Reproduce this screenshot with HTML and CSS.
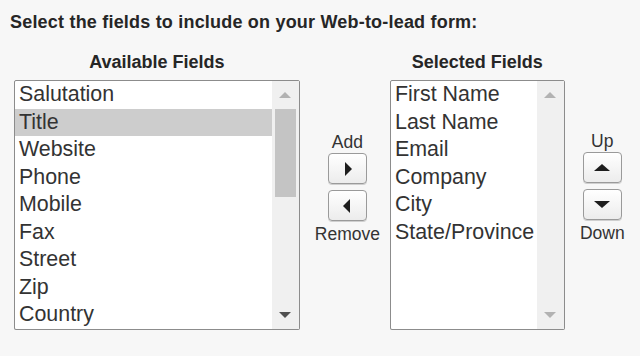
FILE: index.html
```html
<!DOCTYPE html>
<html lang="en">
<head>
    <meta charset="UTF-8">
    <title>Web-to-Lead Fields</title>
    <link rel="stylesheet" href="styles.css">
</head>
<body>
    <p class="intro">Select the fields to include on your Web-to-lead form:</p>

    <div class="picker">
        <!-- available -->
        <div class="field-col col-available">
            <div class="col-title">Available Fields</div>
            <div class="listbox">
                <ul class="options">
                    <li>Salutation</li>
                    <li class="selected">Title</li>
                    <li>Website</li>
                    <li>Phone</li>
                    <li>Mobile</li>
                    <li>Fax</li>
                    <li>Street</li>
                    <li>Zip</li>
                    <li>Country</li>
                </ul>
                <div class="scrollbar">
                    <span class="arrow arrow-up light"></span>
                    <div class="track"><div class="thumb"></div></div>
                    <span class="arrow arrow-down"></span>
                </div>
            </div>
        </div>

        <!-- add / remove -->
        <div class="mover">
            <span class="mover-label">Add</span>
            <button class="mv-btn" title="Add"><span class="tri tri-right"></span></button>
            <button class="mv-btn" title="Remove"><span class="tri tri-left"></span></button>
            <span class="mover-label">Remove</span>
        </div>

        <!-- selected -->
        <div class="field-col col-selected">
            <div class="col-title">Selected Fields</div>
            <div class="listbox">
                <ul class="options">
                    <li>First Name</li>
                    <li>Last Name</li>
                    <li>Email</li>
                    <li>Company</li>
                    <li>City</li>
                    <li>State/Province</li>
                </ul>
                <div class="scrollbar">
                    <span class="arrow arrow-up light"></span>
                    <div class="track"></div>
                    <span class="arrow arrow-down light"></span>
                </div>
            </div>
        </div>

        <!-- order -->
        <div class="mover order">
            <span class="mover-label">Up</span>
            <button class="mv-btn" title="Up"><span class="tri tri-up"></span></button>
            <button class="mv-btn" title="Down"><span class="tri tri-down"></span></button>
            <span class="mover-label">Down</span>
        </div>
    </div>
</body>
</html>
```

FILE: styles.css
```css
/* base */
body {
    margin: 0;
    padding: 12px 0 0 10px;
    background: #f7f7f7;
    font-family: 'Liberation Sans', Arial, sans-serif;
    color: #262626;
}

/* heading line */
.intro {
    margin: 0;
    font-size: 18px;
    font-weight: bold;
    letter-spacing: 0.2px;
    line-height: 20px;
}

.picker {
    display: flex;
    align-items: flex-start;
    margin-top: 20px;
}

.field-col {
    display: flex;
    flex-direction: column;
}

.col-available {
    width: 288px;
    margin-left: 4px;
}

.col-selected {
    width: 176px;
}

.col-title {
    text-align: center;
    font-size: 18px;
    font-weight: bold;
    line-height: 20px;
    margin-bottom: 8px;
}

/* list box */
.listbox {
    display: flex;
    height: 248px;
    background: #fff;
    border: 1px solid #8c8c8c;
    border-radius: 2px;
    box-shadow: 0 1px 0 #d6d6d6;
}

.options {
    flex: 1;
    list-style: none;
    margin: 0;
    padding: 0;
    font-size: 21.4px;
    color: #333;
    overflow: hidden;
}

.options li {
    height: 27.5px;
    line-height: 27.5px;
    padding-left: 4px;
    white-space: nowrap;
}

.options li.selected {
    background: #cdcdcd;
}

.scrollbar {
    width: 27px;
    display: flex;
    flex-direction: column;
    align-items: center;
    background: #f0f0f0;
}

.track {
    flex: 1;
    width: 100%;
    padding: 0 3px;
    box-sizing: border-box;
}

.thumb {
    height: 88px;
    background: #c4c4c4;
}

.arrow {
    width: 0;
    height: 0;
    margin: 11px 0;
    border-left: 6px solid transparent;
    border-right: 6px solid transparent;
}

.arrow-up {
    border-bottom: 6px solid #505050;
}

.arrow-down {
    border-top: 6px solid #505050;
}

.arrow-up.light {
    border-bottom-color: #b2b2b2;
}

.arrow-down.light {
    border-top-color: #b2b2b2;
}

/* add/remove, up/down */
.mover {
    width: 91px;
    box-sizing: border-box;
    padding: 81px 0 0 5px;
    display: flex;
    flex-direction: column;
    align-items: center;
    font-size: 17.5px;
    color: #333;
}

.mover.order {
    width: 76px;
    padding: 80px 0 0 0;
}

.mover-label {
    line-height: 18px;
}

.mover-label:first-child {
    margin-bottom: 2px;
}

.mover-label:last-child {
    margin-top: 4px;
}

.mv-btn {
    width: 39px;
    height: 31px;
    padding: 0;
    display: flex;
    align-items: center;
    justify-content: center;
    border: 1px solid #9a9a9a;
    border-radius: 4px;
    background: linear-gradient(#ffffff, #ececec);
    box-shadow: 0 1px 0 #cfcfcf;
}

.mv-btn + .mv-btn {
    margin-top: 6px;
}

.tri {
    width: 0;
    height: 0;
}

.tri-right {
    border-top: 7px solid transparent;
    border-bottom: 7px solid transparent;
    border-left: 7px solid #1e1e1e;
    margin-left: 2px;
}

.tri-left {
    border-top: 7px solid transparent;
    border-bottom: 7px solid transparent;
    border-right: 7px solid #1e1e1e;
    margin-right: 2px;
}

.tri-up {
    border-left: 8px solid transparent;
    border-right: 8px solid transparent;
    border-bottom: 7px solid #1e1e1e;
}

.tri-down {
    border-left: 8px solid transparent;
    border-right: 8px solid transparent;
    border-top: 7px solid #1e1e1e;
}
```
